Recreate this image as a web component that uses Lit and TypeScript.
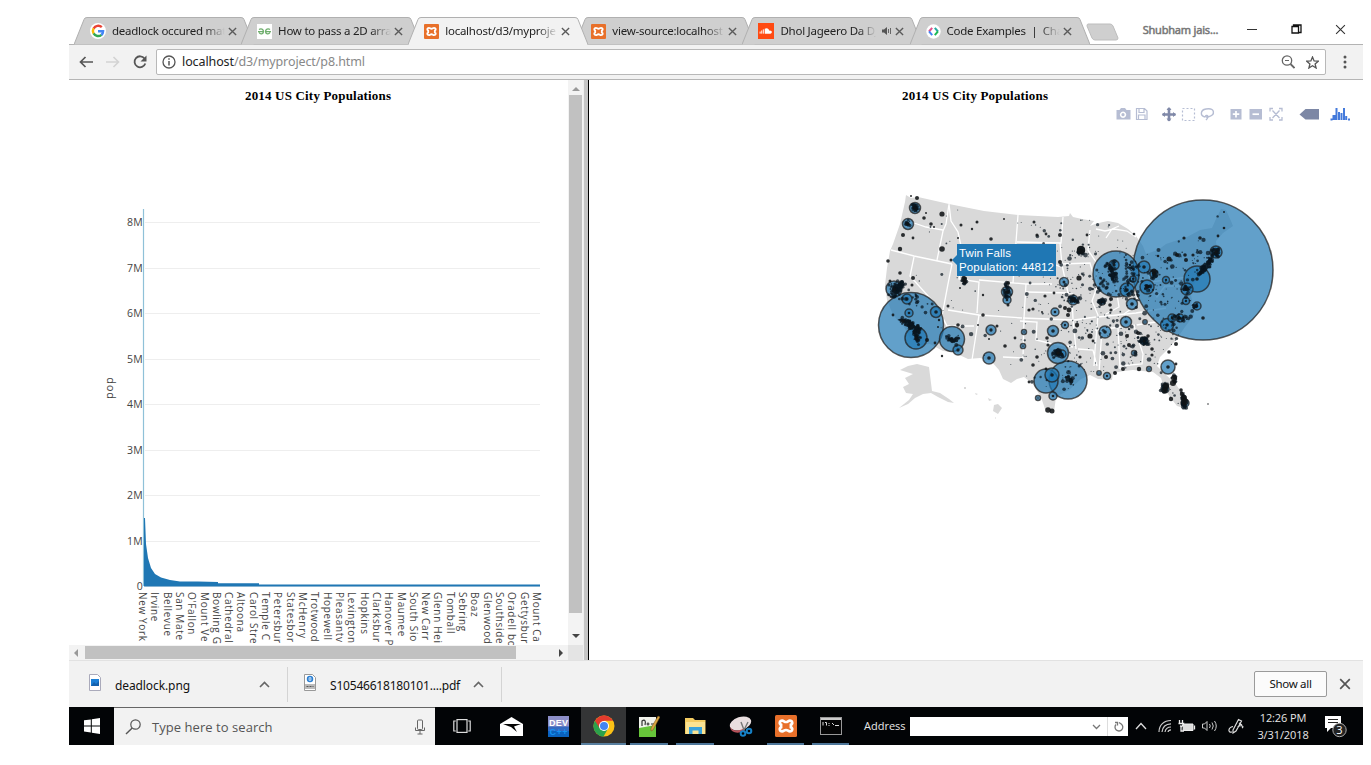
import { LitElement, html, svg, css } from "lit";
import { customElement } from "lit/decorators.js";

const TABS = [
  { icon: "google", title: "deadlock occured mat", active: false },
  { icon: "geeks", title: "How to pass a 2D arra", active: false },
  { icon: "xampp", title: "localhost/d3/myproje", active: true },
  { icon: "xampp", title: "view-source:localhost", active: false },
  { icon: "cloud", title: "Dhol Jageero Da DJ", active: false, audio: true },
  { icon: "code", title: "Code Examples  |  Cha", active: false },
];

const TICKS = ["0", "1M", "2M", "3M", "4M", "5M", "6M", "7M", "8M"];

const CITIES = [
  "New York", "Irvine", "Bellevue", "San Mate", "O'Fallon", "Mount Ve", "Bowling G",
  "Cathedral", "Altoona", "Carol Stre", "Temple C", "Petersbur", "Statesbor",
  "McHenry", "Trotwood", "Hopewell", "Pleasantv", "Lexington", "Hopkins", "Clarksbur",
  "Hanover P", "Maumee", "South Sio", "New Carr", "Glenn Hei", "Tomball",
  "Sebring", "Boaz", "Glenwood", "Southside", "Oradell bo", "Gettysbur", "Mount Ca",
];

const US: number[][] = [
  [905, 202], [906, 195], [911, 198], [918, 197], [949, 204], [984, 211], [1018, 215], [1058, 217], [1069, 216],
  [1070, 213], [1073, 217], [1082, 219], [1094, 221], [1090, 226], [1095, 224], [1103, 222], [1108, 221],
  [1118, 223], [1128, 229], [1136, 236], [1143, 246], [1146, 254], [1158, 250], [1166, 244], [1178, 240], [1187, 237],
  [1200, 230], [1212, 228], [1216, 219], [1221, 209], [1226, 210], [1231, 221], [1233, 226], [1223, 233], [1216, 241],
  [1217, 251], [1220, 255], [1209, 262], [1202, 268], [1198, 278], [1194, 284], [1190, 290], [1192, 300], [1191, 306],
  [1194, 315], [1185, 327], [1178, 337], [1170, 347], [1160, 357], [1157, 366], [1165, 374], [1175, 383], [1182, 393],
  [1187, 402], [1184, 408], [1177, 406], [1170, 397], [1164, 388], [1161, 378], [1153, 372], [1142, 371], [1133, 370],
  [1124, 371], [1113, 373], [1112, 380], [1098, 379], [1090, 375], [1081, 379], [1069, 390], [1056, 397], [1054, 412],
  [1045, 409], [1041, 397], [1032, 383], [1024, 377], [1017, 379], [1011, 383], [1003, 379], [999, 370], [991, 361],
  [980, 358], [968, 359], [953, 352], [943, 351], [930, 344], [919, 345], [910, 338], [904, 327], [893, 315],
  [887, 300], [885, 285], [887, 268], [890, 251], [893, 244], [900, 224],
];

const BORDERS = [
  "M903 220l14 4 9 3 17 3M949 204l-3 20-3 7-6 29M949 204l2 17 7 11 3 14 13 3M891 250l23 6 38 8M914 257l-4 19 29 32 4 18",
  "M952 264l-4 20-6 32 5 10 27 0M948 310l31 5 43 3M979 249l-3 18-14-2M962 264l-3 15 20 3-2 31M1018 215l-5 68M979 246l38 4",
  "M979 280l47 4 26 0M1026 284l-2 34M979 315l-7 45M1024 318l-1 40-20-1M1017 242l44 1 2-26M1018 263l35 1 8 3",
  "M1060 243l2 22 6 28M1023 318l49 2M1020 321l17 1-1 18 17 4 20 3M1026 292l45 1M1061 264l29-1 4 14M1072 293l1 27 3 29",
  "M1074 320l22-3M1078 349l15 1 4 16M1090 230l-2 20 8 12 1 25-5 14 6 14-3 35-1 16M1098 317l38-4 30-5M1095 330l35-4 26-4",
  "M1102 329l-3 44M1118 328l2 41M1134 326l9 28-1 10-22 2M1116 287l3 20-13 7M1135 285l3 19-14 10M1150 280l7 17 8-11 25 0M1142 256l9 26 37-5",
  "M1096 229l9 2 9-2 13 2 9 6M1106 238l6-9 7-3",
];

const ALASKA = "M900 370l8-4 9-2 12 3 3 24 8 2 9 6 5 4-6-1-10-5-7-4-8 1-8 4-7 6-9 4 10-8 4-6-7-1-3-6 6-3-4-6 8-4z";

/* x, y, radius */
const BUBBLES: number[][] = [
  [1203, 270, 70], [911, 325, 32.5], [1116, 274, 23], [1068, 380, 19], [1046, 381, 12], [952, 339, 12.5],
  [1197, 279, 13], [1058, 353, 10.5], [916, 338, 11], [1052, 375, 7], [894, 289, 8], [915, 208, 5.5],
  [908, 224, 5.5], [1007, 292, 5.5], [1007, 300, 4], [991, 330, 5], [989, 358, 6], [936, 312, 5.5],
  [907, 299, 5], [909, 313, 4], [958, 350, 5], [1105, 332, 6], [1168, 367, 7], [1147, 287, 7],
  [1144, 267, 6], [1127, 290, 7], [1132, 304, 5.5], [1126, 322, 5.5], [1144, 341, 4], [1167, 325, 6.5],
  [1216, 252, 6], [1187, 289, 6], [1055, 312, 4], [1064, 282, 4.5], [1053, 331, 5.5], [1065, 325, 3.5],
  [1197, 306, 4], [1038, 398, 2.5], [1053, 396, 4], [1107, 376, 3.5], [1081, 250, 3.5], [1102, 302, 3],
  [1180, 318, 4], [1165, 389, 4], [1185, 403, 4], [1166, 280, 3.5], [1154, 274, 4],
  [1024, 332, 2.5], [1023, 346, 2.6], [1099, 373, 2.2], [1134, 353, 2.5], [1073, 300, 5], [1114, 265, 5],
  [1186, 301, 3.5], [1133, 279, 3], [1172, 318, 4], [1149, 369, 2.4], [1145, 322, 2.2], [1062, 354, 4],
];

/* small cities: x, y, radius */
const DOTS: number[][] = [
  [942, 214, 2.6], [924, 218, 1.8], [931, 224, 1.8], [934, 227, 1], [926, 213, 1], [913, 238, 1.4], [903, 235, 2],
  [900, 249, 2.2], [942, 249, 2.8], [961, 225, 1.5], [977, 222, 1.5], [991, 239, 1.8], [972, 229, 1.2], [958, 238, 1],
  [1034, 222, 1.5], [1037, 235, 1.6], [1060, 235, 2], [1060, 262, 2], [1079, 278, 2.6], [1081, 250, 4], [1004, 219, 1],
  [951, 260, 1.5], [964, 279, 2.8], [965, 282, 2], [900, 273, 1.8], [888, 261, 1.8], [913, 278, 2], [912, 285, 1.5],
  [890, 281, 1.5], [948, 306, 1.5], [983, 295, 1.2], [960, 288, 1], [983, 315, 1.8], [978, 325, 1], [1008, 283, 2],
  [1008, 305, 1.5], [997, 326, 1.5], [1005, 346, 1.8], [989, 339, 1], [1029, 310, 1.6], [1033, 309, 1.6], [1015, 338, 1.4],
  [1033, 365, 1.8], [1037, 357, 1.8], [1029, 382, 1.4], [1048, 410, 2.8], [1052, 411, 2.5], [1045, 296, 1.6], [1054, 293, 1.4],
  [1065, 308, 2], [1069, 310, 2.4], [1068, 315, 2], [1077, 325, 2.2], [1048, 345, 1.6], [1047, 338, 1.8], [1134, 234, 1.3],
  [1184, 238, 1.6], [1218, 236, 1.4], [1224, 228, 1.3], [1224, 212, 1], [1177, 255, 2], [1185, 255, 1.8], [1169, 259, 2.5],
  [1158, 256, 1.3], [1203, 318, 1.8], [1176, 344, 2], [1169, 352, 1.8], [1152, 349, 1.8], [1138, 333, 2], [1176, 364, 1.4],
  [1090, 336, 2.6], [1106, 357, 2], [1139, 369, 2.2], [1127, 336, 2], [1123, 369, 2], [1115, 373, 2], [1080, 357, 1.6],
  [942, 356, 1.2], [958, 325, 1.8], [1042, 312, 1], [911, 196, 1], [917, 198, 2], [903, 321, 2], [893, 315, 1.4],
  [927, 340, 2], [935, 343, 1.4], [939, 320, 1.2], [938, 327, 1], [1174, 378, 3], [1173, 383, 3], [1171, 399, 2.2],
  [1181, 390, 1.8], [1184, 398, 3], [1185, 402, 3.4], [1182, 394, 2.2], [1208, 404, 0.8], [1166, 386, 3], [1165, 390, 3],
  [1087, 235, 1.4], [1046, 234, 1.4], [1046, 369, 1.4], [1129, 345, 2], [1148, 336, 1.8], [1152, 355, 1.6], [1093, 341, 1.4],
  [1111, 299, 2], [1110, 305, 1.8], [1111, 310, 1.6], [1186, 260, 2], [1193, 255, 1.6], [1200, 238, 1.8], [1154, 271, 2.6],
];

/* dense metro areas: x, y, spreadX, spreadY, count, tilt */
const CLUSTERS: number[][] = [
  [911, 325, 11, 3.5, 84, 0.45], [917, 333, 3, 9, 64, 0], [895, 291, 6, 7, 76, 0], [900, 285, 3, 4, 34, 0],
  [915, 208, 3, 4, 34, 0], [908, 224, 2, 2, 12, 0], [1113, 275, 4, 6, 52, 0.5], [1109, 267, 4, 4, 20, 0],
  [1058, 353, 5, 4, 62, 0], [1069, 380, 4, 3, 22, 0.5], [952, 339, 6, 3, 34, 0], [1007, 291, 3, 7, 42, 0],
  [1204, 268, 5, 4, 74, -0.8], [1210, 260, 3, 5, 34, -0.8], [1216, 252, 4, 4, 38, 0], [1186, 289, 4, 4, 22, 0],
  [1154, 274, 3, 4, 24, 0], [1144, 341, 5, 4, 44, 0], [1184, 401, 2, 7, 54, 0], [1165, 388, 4, 4, 30, 0],
  [1147, 287, 3, 2, 14, 0], [1073, 299, 6, 3, 34, 0], [1102, 302, 4, 3, 30, 0], [1180, 318, 8, 3, 30, 0],
  [1081, 251, 3, 3, 24, 0], [1133, 268, 7, 8, 24, 0], [1130, 290, 9, 10, 28, 0], [1196, 306, 3, 2, 14, 0], [964, 281, 2, 3, 18, 0],
  [1102, 285, 8, 9, 18, 0], [915, 300, 16, 8, 18, 0.6], [1174, 380, 3, 4, 16, 0],
];

function inside(x: number, y: number): boolean {
  let hit = false;
  for (let i = 0, j = US.length - 1; i < US.length; j = i++) {
    const [xi, yi] = US[i];
    const [xj, yj] = US[j];
    if (yi > y !== yj > y && x < ((xj - xi) * (y - yi)) / (yj - yi) + xi) hit = !hit;
  }
  return hit;
}

function rng(seed: number) {
  let s = seed;
  return () => {
    s = (s * 1664525 + 1013904223) % 4294967296;
    return s / 4294967296;
  };
}

function scatter(): number[][] {
  const rand = rng(2014);
  const out: number[][] = [];
  for (let i = 0; i < 3600; i++) {
    const x = 885 + rand() * 340;
    const y = 196 + rand() * 214;
    const keep = x > 1060 ? (y > 250 ? 0.5 : 0.12) : x > 1020 ? 0.14 : 0.035;
    if (rand() < keep && inside(x, y)) out.push([x, y, 0.5 + Math.pow(rand(), 4) * 1.9]);
  }
  for (const [cx, cy, sx, sy, n, tilt] of CLUSTERS) {
    for (let i = 0; i < n; i++) {
      const dx = (rand() + rand() - 1) * sx * 1.3;
      const dy = (rand() + rand() - 1) * sy * 1.3;
      out.push([cx + dx, cy + dy + dx * tilt, 0.7 + rand() * 1.2]);
    }
  }
  return out;
}

const SCATTER = scatter();

const xampp = (s: number) => html`<svg width=${s} height=${s} viewBox="0 0 22 22">
  <rect width="22" height="22" rx="1.5" fill="#e8702a"/>
  <path d="M7.200 5.600c-2.600 0-3.300 3-1.100 4.100v2.600c-2.200 1.100-1.500 4.100 1.100 4.100 1.600 0 2-1.400 3.800-1.400s2.200 1.400 3.800 1.400c2.600 0 3.300-3 1.100-4.100v-2.600c2.200-1.100 1.500-4.100-1.100-4.100-1.600 0-2 1.400-3.800 1.400s-2.200-1.400-3.800-1.400z" fill="none" stroke="#fff" stroke-width="2.700"/>
  </svg>`;

function favicon(name: string) {
  switch (name) {
    case "google":
      return html`<svg width="16" height="16" viewBox="0 0 16 16"><circle cx="8" cy="8" r="8" fill="#fff"/>
        <g fill="none" stroke-width="2.400"><path d="M11.800 4.200A5.200 5.200 0 0 0 3.600 5.600" stroke="#ea4335"/><path d="M3.600 5.400A5.200 5.200 0 0 0 3.600 10.600" stroke="#fbbc05"/><path d="M3.600 10.400A5.200 5.200 0 0 0 11.500 11.800" stroke="#34a853"/><path d="M8 8.200h5.100A5.200 5.200 0 0 1 11.400 12" stroke="#4285f4"/></g></svg>`;
    case "geeks":
      return html`<svg width="15" height="15" viewBox="0 0 15 15"><rect width="15" height="15" fill="#fff"/>
        <g fill="none" stroke="#6fae6d" stroke-width="1.300"><path d="M2 5.500c2-1.500 4.500-.3 4.500 2S3.500 11 2 8.500M1 7.600h5.500M13 5.500c-2-1.500-4.500-.3-4.500 2s3 3.500 4.500 1M14 7.600H8.500"/></g></svg>`;
    case "cloud":
      return html`<svg width="16" height="16" viewBox="0 0 15 15"><rect width="15" height="15" fill="#ff4a12"/>
        <path d="M2 8v2M3.500 7v3M5 6v4" stroke="#fff" stroke-width=".9"/><path d="M6.300 10V5.500c1.800-1.400 4-.4 4.200 1.700 3-.6 3.300 2.800 1 2.800z" fill="#fff"/></svg>`;
    case "code":
      return html`<svg width="15" height="15" viewBox="0 0 15 15"><circle cx="7.500" cy="7.500" r="7.200" fill="#fff"/>
        <g fill="none" stroke-width="2"><path d="M6.200 3.800L3 7.500" stroke="#e0518c"/><path d="M3 7.300l3.200 3.800" stroke="#4285f4"/><path d="M8.800 3.800L12 7.500" stroke="#27a9a0"/><path d="M12 7.300l-3.200 3.800" stroke="#1db954"/></g></svg>`;
    default:
      return xampp(15);
  }
}

const cross = (s: number, w: number, c = "#5a5a5a") => html`<svg width=${s} height=${s} viewBox="0 0 10 10"><path d="M1 1l8 8M9 1L1 9" stroke=${c} stroke-width=${w} fill="none"/></svg>`;

@customElement("browser-tab")
class BrowserTab extends LitElement {
  static properties = { tab: { attribute: false } };
  declare tab: any;
  static styles = css`
    :host { display: block; flex: none; width: 180px; height: 28px; margin-right: -12.900px; position: relative; }
    .shape { position: absolute; inset: 0; }
    .row { position: relative; display: flex; align-items: center; height: 28px; padding-left: 16px; }
    .row svg { flex: none; }
    .title { width: 113px; margin-left: 6px; white-space: pre; font: 11.500px/16px "Noto Sans", sans-serif; letter-spacing: -.25px; color: #222;
      -webkit-mask-image: linear-gradient(90deg, #000 82%, transparent 100%); mask-image: linear-gradient(90deg, #000 82%, transparent 100%); }
    .title.short { width: 96px; margin-right: 5px; }
    .close { margin-left: 3px; display: flex; }
  `;
  render() {
    const t = this.tab;
    return html`<svg class="shape" width="180" height="28" viewBox="0 0 180 28">
        <path d="M0 27.500L10 2.500Q10.500 .5 13 .5H167Q169.500 .5 170 2.500L180 27.500" fill=${t.active ? "#f2f2f2" : "#cfcfcf"} stroke="#b0b0b0"/>
        ${t.active ? svg`<path d="M1 27.500H179" stroke="#f2f2f2"/>` : ""}
      </svg>
      <div class="row">${favicon(t.icon)}<span class="title ${t.audio ? "short" : ""}">${t.title}</span>
        ${t.audio ? html`<svg width="11" height="10" viewBox="0 0 11 10"><path d="M1 3.500h2L6 1v8L3 6.500H1z" fill="#555"/><path d="M7.500 3v4M9.500 2v6" stroke="#666"/></svg>` : ""}
        <span class="close">${cross(9, 1.500)}</span></div>`;
  }
}

@customElement("population-chart")
class PopulationChart extends LitElement {
  static styles = css`
    :host { display: block; width: 499px; height: 565px; overflow: hidden; background: #fff; }
    svg { display: block; }
    text { font-family: "Open Sans", sans-serif; fill: #444; }
    .title { font-family: "Liberation Serif", serif; font-weight: bold; font-size: 13px; fill: #000; }
    .tick { font-size: 10.500px; text-anchor: end; letter-spacing: .3px; }
    .city { font-size: 10px; letter-spacing: .65px; }
    .axis { font-size: 11px; letter-spacing: .8px; }
  `;
  render() {
    return html`<svg width="499" height="565" viewBox="69 80 499 565">
      <text class="title" x="245" y="99.500" textLength="146">2014 US City Populations</text>
      ${TICKS.map((t, i) => {
        const y = 586 - i * 45.500;
        return svg`<path d="M145 ${Math.round(y) + 0.500}H540" stroke="#eeeeee"/><text class="tick" x="143" y=${y + 4}>${t}</text>`;
      })}
      <path d="M143.500 209V586" stroke="#8fc1d8" stroke-width="1.200"/>
      <path d="M144 518h1l1 26 2 14 3 10 4 6 6 3.500 9 2.500 10 1.500h18l20 .5v1.300h41v1.200h281v2H144z" fill="#1f77b4"/>
      <text class="axis" transform="translate(112.500 399) rotate(-90)">pop</text>
      ${CITIES.map((c, i) => svg`<text class="city" transform="translate(${139 + i * 12.310} 592) rotate(90)">${c}</text>`)}
    </svg>`;
  }
}

@customElement("population-map")
class PopulationMap extends LitElement {
  static styles = css`
    :host { display: block; flex: 1; height: 580px; background: #fff; }
    svg { display: block; }
    .title { font-family: "Liberation Serif", serif; font-weight: bold; font-size: 13px; }
    .tip { font-family: "Liberation Sans", sans-serif; font-size: 11.500px; fill: #fff; }
  `;
  render() {
    return html`<svg width="774" height="580" viewBox="589 80 774 580">
      <text class="title" x="902" y="99.500" textLength="146">2014 US City Populations</text>
      <g fill="#b6bdd3">
        <path fill-rule="evenodd" d="M1116.500 110h3l1.500-2h4l1.500 2h4v9.500h-14zM1123 111.500a3.200 3.200 0 1 0 .1 0z"/><circle cx="1123" cy="114.700" r="1.600"/>
        <path d="M1136.500 108.500h8l2.500 2.500v8.500h-10.500zM1139 108.500v4h5v-4M1138.500 119.500v-4.500h6.500v4.500" fill="none" stroke="#b6bdd3" stroke-width="1.200"/>
        <path d="M1169 108v13M1162.500 114.500h13" stroke="#8089a8" stroke-width="2.600"/>
        <path d="M1169 107l2.500 3h-5zM1169 121.500l2.500-3h-5zM1162 114.500l3-2.500v5zM1176 114.500l-3-2.500v5z" fill="#8089a8"/>
        <rect x="1182.500" y="108.500" width="12" height="12" fill="none" stroke="#b6bdd3" stroke-width="1.200" stroke-dasharray="2 2"/>
        <path d="M1205 117c-5-1-5-7 1-8 9-1.500 10 6 2 8-3 .8-3-2-1-1.500s.5 3-1 4.500" fill="none" stroke="#b6bdd3" stroke-width="1.400"/>
        <rect x="1230.500" y="109" width="11" height="10.500"/><path d="M1236 111v6.500M1232.800 114.200h6.500" stroke="#fff" stroke-width="1.700"/>
        <rect x="1249.500" y="109" width="12.500" height="10.500"/><path d="M1252.500 114.200h6.500" stroke="#fff" stroke-width="1.700"/>
        <path d="M1270 111.500v-3h3M1279 108.500h3v3M1282 117v3h-3M1273 120h-3v-3M1272.500 110.500l7 7.500M1279.500 110.500l-7 7.500" fill="none" stroke="#b6bdd3" stroke-width="1.300"/>
        <path d="M1299.500 114.500l6-5.500h13.500v10.500h-13.500z" fill="#7c87a5"/>
        <path d="M1330.500 119.500h2M1333.500 120v-4h1.500v4M1336.500 120v-12M1339 120v-8M1341.500 120v-7M1344 120v-12M1346.200 120v-4M1348 119.500h2" stroke="#447adb" stroke-width="2" fill="none"/>
      </g>
      <g fill="#d9d9d9">
        <path d="M${US.map((p) => p.join(" ")).join("L")}Z"/>
        <path d=${ALASKA}/>
        <path d="M994 405l4-1 4 4-4 6-5-3zM988 398l4 2-3 1zM975 393l3 1-2 1zM964 387h2v2h-2zM995 417l1 1-1 1z"/>
      </g>
      <g fill="none" stroke="#fff" stroke-width="1.300">${BORDERS.map((d) => svg`<path d=${d}/>`)}</g>
      <g fill="#1f77b4" fill-opacity=".7" stroke="#222" stroke-opacity=".75" stroke-width="1.500">
        ${BUBBLES.map(([x, y, r]) => svg`<circle cx=${x} cy=${y} r=${r}/>`)}
      </g>
      <g fill="#0a1620" fill-opacity=".72">${SCATTER.map(([x, y, r]) => svg`<circle cx=${x.toFixed(1)} cy=${y.toFixed(1)} r=${r.toFixed(2)}/>`)}</g>
      <g fill="#101316" fill-opacity=".88">${DOTS.map(([x, y, r]) => svg`<circle cx=${x} cy=${y} r=${r}/>`)}
        ${BUBBLES.slice(6).map(([x, y, r]) => svg`<circle cx=${x} cy=${y} r=${Math.min(1.8, r / 3)}/>`)}</g>
      <path d="M952 260l5-5v-11h99v32h-99v-11z" fill="#1f77b4"/>
      <text class="tip" x="959" y="257" textLength="52">Twin Falls</text>
      <text class="tip" x="959" y="271" textLength="95">Population: 44812</text>
    </svg>`;
  }
}

@customElement("download-shelf")
class DownloadShelf extends LitElement {
  static styles = css`
    :host { display: flex; box-sizing: border-box; height: 47px; background: #f2f2f2; border-top: 1px solid #e2e2e2; align-items: center; font: 12px/16px "Noto Sans", sans-serif; color: #111; }
    .item { display: flex; align-items: center; box-sizing: border-box; height: 35px; border-right: 1px solid #d4d4d4; }
    .item.a { width: 219px; padding-left: 20px; }
    .item.b { width: 214px; padding-left: 16px; }
    .item svg:first-child { margin-bottom: 3px; }
    .name { padding-top: 4px; white-space: nowrap; }
    .a .name { width: 144px; margin-left: 14px; letter-spacing: -.1px; }
    .b .name { width: 143px; margin-left: 14px; letter-spacing: -.2px; }
    .all { box-sizing: border-box; margin-left: auto; width: 73px; height: 26px; border: 1px solid #9a9a9a; border-radius: 2px; background: #fbfbfb; display: flex; align-items: center; justify-content: center; font-size: 11.500px; letter-spacing: -.3px; }
    .x { display: flex; margin: 0 12px 0 12px; }
  `;
  render() {
    const chev = html`<svg width="11" height="7" viewBox="0 0 11 7"><path d="M1 6l4.500-4.500L10 6" fill="none" stroke="#666" stroke-width="1.600"/></svg>`;
    return html`<div class="item a"><svg width="12" height="17" viewBox="0 0 12 17"><path d="M.5 .5h8l3 3v13H.5z" fill="#fff" stroke="#aab"/><path d="M2 5h8v7H2z" fill="#1c7fd6"/><path d="M2 12l3-4 2 2 3-3v5z" fill="#1561ad"/></svg>
        <span class="name">deadlock.png</span>${chev}</div>
      <div class="item b"><svg width="12" height="17" viewBox="0 0 12 17"><path d="M.5 .5h8l3 3v13H.5z" fill="#fff" stroke="#999"/><circle cx="6" cy="5" r="2.500" fill="none" stroke="#2b7fd2" stroke-width="1.500"/><path d="M3.500 5h5" stroke="#2b7fd2"/><path d="M1 10h10v5H1z" fill="#bbb"/><path d="M2.500 12.500h7" stroke="#555" stroke-dasharray="2 1"/></svg>
        <span class="name">S10546618180101....pdf</span>${chev}</div>
      <div class="all">Show all</div><span class="x">${cross(12, 1.400, "#555")}</span>`;
  }
}

@customElement("task-bar")
class TaskBar extends LitElement {
  static styles = css`
    :host { display: flex; height: 38px; background: #020406; color: #fff; font-family: "Open Sans", sans-serif; align-items: stretch; }
    svg { display: block; flex: none; }
    .start { width: 45px; display: flex; align-items: center; justify-content: center; }
    .search { box-sizing: border-box; width: 321px; background: #f2f2f2; display: flex; align-items: center; padding: 0 9px 0 11px; font-size: 13px; letter-spacing: .05px; color: #555; border-top: 1px solid #666; }
    .search span { flex: 1; margin-left: 10px; }
    .apps { display: grid; grid-template-columns: 53px 47px 46px 45px 46px 46px 45px 45px 45px; }
    .app { box-sizing: border-box; display: flex; align-items: center; justify-content: center; border-bottom: 2px solid transparent; padding-top: 2px; }
    .open { border-color: #4d7699; margin: 0 4px; }
    .current { background: #343536; border-color: #587f9f; }
    .address { width: 46px; margin-left: 11px; font-size: 11px; line-height: 38px; color: #e8e8e8; }
    .box { box-sizing: border-box; width: 218px; height: 19px; margin-top: 10px; background: #fff; display: flex; align-items: center; justify-content: flex-end; gap: 6px; padding-right: 4px; }
    .box .sep { width: 1px; height: 19px; background: #ddd; }
    .tray { display: flex; align-items: center; flex: 1; padding-left: 7px; }
    .wifi { margin-left: 11px; }
    .battery, .sound { margin-left: 6px; }
    .pen { margin-left: 11px; }
    .note { margin-left: 12px; }
    .clock { width: 58px; margin-left: 9px; font-size: 11px; line-height: 17px; text-align: center; letter-spacing: -.1px; color: #e6e6e6; }
    .clock div { white-space: nowrap; }
  `;
  render() {
    return html`
      <div class="start"><svg width="16" height="16" viewBox="0 0 16 16" fill="#fff"><path d="M0 2.300l6.800-.9v6H0zM7.800 1.200L16 0v7.400H7.800zM0 8.500h6.800v6L0 13.600zM7.800 8.500H16V16l-8.200-1.200z"/></svg></div>
      <div class="search"><svg width="17" height="16" viewBox="0 0 17 16"><circle cx="10.500" cy="5.500" r="4.700" fill="none" stroke="#555" stroke-width="1.200"/><path d="M7.200 9L1 15" stroke="#555" stroke-width="1.400"/></svg>
        <span>Type here to search</span>
        <svg width="12" height="16" viewBox="0 0 12 16"><rect x="3.500" y="1" width="5" height="9.500" rx="1" fill="none" stroke="#666"/><path d="M1.500 8.500v3h9v-3M6 12v3M3.500 15h5" fill="none" stroke="#666"/></svg></div>
      <div class="apps">
        <div class="app"><svg width="18" height="14" viewBox="0 0 18 14" fill="none" stroke="#ddd" stroke-width="1.200"><rect x="4" y=".6" width="10" height="12.800"/><path d="M2.800 2H.8v10h2M15.200 2h2v10h-2"/></svg></div>
        <div class="app"><svg width="23" height="19" viewBox="0 0 23 19"><path d="M0 7l11.500-7L23 7v12H0z" fill="#fff"/><path d="M3 7h18l-7 2.500 3 5.500-6-5z" fill="#050505"/></svg></div>
        <div class="app"><svg width="21" height="21" viewBox="0 0 21 21"><rect width="21" height="21" fill="#356ac0"/><rect width="21" height="10.500" fill="#8d8fc8"/><rect y="15" width="21" height="6" fill="#0a62bd"/><text x="10.500" y="9.500" text-anchor="middle" font-family="Liberation Sans" font-weight="bold" font-size="9" textLength="19" fill="#fff">DEV</text><text x="10.500" y="18.500" text-anchor="middle" font-family="Liberation Sans" font-weight="bold" font-size="9" textLength="18" fill="#1592f0">C++</text></svg></div>
        <div class="app current"><svg width="22" height="22" viewBox="0 0 22 22"><circle cx="11" cy="11" r="10.500" fill="#fbc116"/><path d="M11 11L1.900 5.700A10.500 10.500 0 0 0 10.500 21.500L15 13.500z" fill="#2ba24c"/><path d="M2 5.700A10.500 10.500 0 0 1 20.100 5.700H11L6.500 13z" fill="#e33b2e"/><circle cx="11" cy="11" r="5" fill="#fff"/><circle cx="11" cy="11" r="4" fill="#4285f4"/></svg></div>
        <div class="app open"><svg width="22" height="23" viewBox="0 0 22 23"><path d="M1 2h17v20H1z" fill="#f1f3ec"/><path d="M1 13l17-3v12H1z" fill="#67c53a"/><path d="M4 11V6c3-2 4 0 3 4M8.500 9h3M10 7.500v3M13 9h3" stroke="#333" stroke-width="1.200" fill="none"/><path d="M20 1l2 1-7 13-2 1 0-3z" fill="#d9a441" stroke="#70501c" stroke-width=".5"/></svg></div>
        <div class="app open"><svg width="21" height="18" viewBox="0 0 21 18"><path d="M0 1h8l2 2h10.500v14H0z" fill="#f3cc62"/><path d="M1 5h19v12H1z" fill="#fae392"/><path d="M4 17v-7h13v7h-3.500v-3.500h-6V17z" fill="#38a3dc"/></svg></div>
        <div class="app"><svg width="24" height="21" viewBox="0 0 24 21"><ellipse cx="11.500" cy="7.500" rx="11" ry="6.500" transform="rotate(-18 11.500 7.500)" fill="#e9dedf"/><path d="M1 11c3 5 10 4 15 1l-1 3c-6 3-13 2-14-4z" fill="#b9525a"/><path d="M12 6l3 8 4-8" stroke="#777" stroke-width="1.400" fill="none"/><circle cx="14" cy="17.500" r="2.300" fill="none" stroke="#1680c5" stroke-width="2"/><circle cx="20" cy="15" r="2.300" fill="none" stroke="#1680c5" stroke-width="2"/></svg></div>
        <div class="app open">${xampp(22)}</div>
        <div class="app open"><svg width="22" height="18" viewBox="0 0 22 18"><rect x=".5" y=".5" width="21" height="17" fill="#050505" stroke="#999"/><rect x="1" y="1" width="20" height="2" fill="#ccc"/><path d="M3 5v3.500M5 5.500h1.500v3M9 6v1M9 8v1M12 6l2 2M15 8.500h4" stroke="#ddd" fill="none"/></svg></div>
      </div>
      <div class="address">Address</div>
      <div class="box"><svg width="9" height="6" viewBox="0 0 9 6"><path d="M1 1l3.500 3.500L8 1" stroke="#777" stroke-width="1.300" fill="none"/></svg><span class="sep"></span><svg width="10" height="11" viewBox="0 0 10 11"><path d="M2 3.500A3.900 3.900 0 1 0 7.500 3.200L5 1.500M1 1.500h2.500v3" fill="none" stroke="#777" stroke-width="1.300"/></svg></div>
      <div class="tray">
        <svg width="12" height="8" viewBox="0 0 12 8"><path d="M1 7l5-5.500L11 7" fill="none" stroke="#ddd" stroke-width="1.300"/></svg>
        <svg class="wifi" width="14" height="14" viewBox="0 0 14 14" fill="none" stroke="#ccc" stroke-width="1.200"><path d="M1 13C1 6 6 1.500 13 1.500M4 13C4.500 8 8 5 13 4.800M7 13c.5-3 3-5 6-5M10 13c.3-1.500 1.500-2.200 3-2.200"/></svg>
        <svg class="battery" width="18" height="13" viewBox="0 0 18 13"><path d="M5.500 4H15v6.500H5z" fill="#ddd" stroke="#eee"/><path d="M16.500 5.500v4M1.500 0v3M4.500 0v3M.5 3.500h5L4 6.500 2 6M3 6v5h3" fill="none" stroke="#eee" stroke-width="1.300"/></svg>
        <svg class="sound" width="15" height="12" viewBox="0 0 15 12" fill="none" stroke="#ccc"><path d="M.5 4h2L5 1.500v9L2.500 8h-2zM7.500 4q1.500 2 0 4M10 2.500q2.500 3.500 0 7M12.500 1q3.500 5 0 10"/></svg>
        <svg class="pen" width="17" height="16" viewBox="0 0 17 16" fill="none" stroke="#ddd" stroke-width="1.200"><path d="M5 12L10.500 1.500l3 1.500-5.500 10-3 2zM5 8.500c-5 1-5.500 6.500-1 5.500M9.500 9c4-2.500 7-.5 4.500 1M11 5l3 2"/></svg>
        <div class="clock"><div>12:26 PM</div><div>3/31/2018</div></div>
        <svg class="note" width="24" height="24" viewBox="0 0 24 24"><path d="M1 2h16v12H7l-4 4v-4H1z" fill="#fff"/><path d="M4 5.500h10M4 8.500h10" stroke="#222"/><circle cx="15.500" cy="16" r="6.700" fill="#222" stroke="#aaa"/><text x="15.500" y="20" text-anchor="middle" font-family="Open Sans" font-size="11" fill="#fff">3</text></svg>
      </div>`;
  }
}

@customElement("app-root")
class AppRoot extends LitElement {
  static styles = css`
    :host { display: block; box-sizing: border-box; width: 1371px; height: 765px; padding: 17px 8px 0 69px; background: #fff; overflow: hidden; }
    svg { display: block; flex: none; }
    .strip { display: flex; height: 27px; padding-left: 5px; position: relative; z-index: 1; }
    .strip .new { margin: 6px 0 0 8px; }
    .user { margin: 4px 0 0 24px; width: 84px; font: 11px/18px "Noto Sans", sans-serif; color: #777; -webkit-text-stroke: .5px #777; letter-spacing: -.2px; }
    .win { display: flex; gap: 33px; padding-top: 7px; margin-left: 20px; }
    .bar { box-sizing: border-box; display: flex; align-items: center; height: 36px; padding-left: 10px; background: #f2f2f2; border-top: 1px solid #b3b3b3; border-bottom: 1px solid #b5b5b5; }
    browser-tab.on { z-index: 2; }
    .nav { display: flex; gap: 13px; width: 77px; align-items: center; }
    .omni { box-sizing: border-box; width: 1170px; height: 26px; background: #fff; border: 1px solid #b8b8b8; border-radius: 2px; display: flex; align-items: center; padding: 0 6px 0 5px; }
    .url { flex: 1; margin-left: 6px; font: 12.500px/20px "Noto Sans", sans-serif; color: #888; letter-spacing: -.1px; white-space: nowrap; }
    .url b { font-weight: normal; color: #222; }
    .omni .star { margin-left: 11px; }
    .menu { margin-left: 17px; }
    .page { display: flex; height: 580px; }
    .frame { width: 514px; display: grid; grid-template-columns: 499px 15px; grid-template-rows: 565px 15px; }
    .v, .h { background: #f3f3f3; display: flex; align-items: center; }
    .v { flex-direction: column; padding: 7px 0 0; box-sizing: border-box; }
    .v i { display: block; width: 13px; height: 518px; background: #c1c1c1; margin: 4px 0 21px; }
    .h { padding: 0 0 0 5px; box-sizing: border-box; }
    .h i { display: block; width: 431px; height: 13px; background: #c1c1c1; margin: 0 43px 0 7px; }
    .corner { background: #e4e4e4; }
    .split { box-sizing: border-box; width: 6px; background: #c6c6c6; border-left: 1px solid #eee; border-right: 1px solid #000; }
  `;
  render() {
    return html`
      <div class="strip">
        ${TABS.map((t) => html`<browser-tab class=${t.active ? "on" : ""} .tab=${t}></browser-tab>`)}
        <svg class="new" width="34" height="18" viewBox="0 0 34 18"><path d="M3 1h22q2 0 3 2l5 12q0 2-2 2H10q-2 0-3-2L2 3q0-2 1-2z" fill="#cfcfcf" stroke="#bdbdbd"/></svg>
        <div class="user">Shubham jais...</div>
        <div class="win">
          <svg width="11" height="11" viewBox="0 0 11 11"><path d="M0 5.500h10" stroke="#333"/></svg>
          <svg width="11" height="11" viewBox="0 0 11 11" fill="none" stroke="#111" stroke-width="1.300"><path d="M1 2.500h6.500V9H1zM2.500 2V1h7.500v7.500H8"/></svg>
          ${cross(11, 1, "#333")}
        </div>
      </div>
      <div class="bar">
        <div class="nav">
          <svg width="14" height="12" viewBox="0 0 14 12"><path d="M6.500 1L1.500 6l5 5M1.500 6H14" fill="none" stroke="#555" stroke-width="1.700"/></svg>
          <svg width="14" height="12" viewBox="0 0 14 12"><path d="M7.500 1l5 5-5 5M12.500 6H0" fill="none" stroke="#d3d3d3" stroke-width="1.600"/></svg>
          <svg width="14" height="14" viewBox="0 0 14 14"><path d="M11.500 3.500A5.500 5.500 0 1 0 12.300 8.500" fill="none" stroke="#555" stroke-width="1.800"/><path d="M13.500 .5v6h-6z" fill="#555"/></svg>
        </div>
        <div class="omni">
          <svg width="14" height="14" viewBox="0 0 14 14"><circle cx="7" cy="7" r="6" fill="none" stroke="#555" stroke-width="1.300"/><path d="M7 6v4.500M7 3.300v1.500" stroke="#555" stroke-width="1.500"/></svg>
          <span class="url"><b>localhost</b>/d3/myproject/p8.html</span>
          <svg width="14" height="14" viewBox="0 0 14 14"><circle cx="6" cy="5.500" r="4.700" fill="none" stroke="#666" stroke-width="1.300"/><path d="M9.500 9l4 4" stroke="#666" stroke-width="1.800"/><path d="M4 5.500h4" stroke="#666"/></svg>
          <svg class="star" width="13" height="13" viewBox="0 0 13 13"><path d="M6.500 1l1.600 3.900 4.200.3-3.200 2.700 1 4.100-3.600-2.200L2.900 12l1-4.100L.7 5.200l4.200-.3z" fill="none" stroke="#555" stroke-width="1.300"/></svg>
        </div>
        <svg class="menu" width="4" height="14" viewBox="0 0 4 14" fill="#555"><circle cx="2" cy="2" r="1.500"/><circle cx="2" cy="7" r="1.500"/><circle cx="2" cy="12" r="1.500"/></svg>
      </div>
      <div class="page">
        <div class="frame">
          <population-chart></population-chart>
          <div class="v"><svg width="8" height="4"><path d="M0 4l4-4 4 4z" fill="#999"/></svg><i></i><svg width="8" height="4"><path d="M0 0l4 4 4-4z" fill="#444"/></svg></div>
          <div class="h"><svg width="4" height="8"><path d="M4 0L0 4l4 4z" fill="#999"/></svg><i></i><svg width="4" height="8"><path d="M0 0l4 4-4 4z" fill="#444"/></svg></div>
          <div class="corner"></div>
        </div>
        <div class="split"></div>
        <population-map></population-map>
      </div>
      <download-shelf></download-shelf>
      <task-bar></task-bar>`;
  }
}
